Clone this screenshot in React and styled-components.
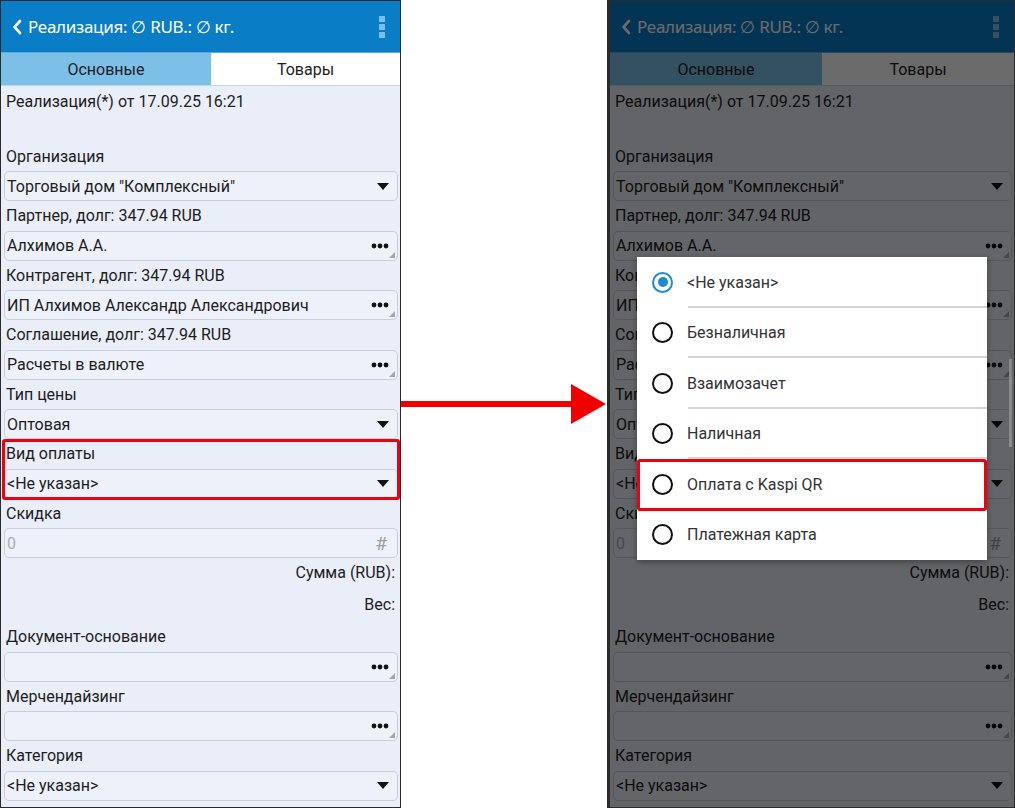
import React from 'react'
import styled, { createGlobalStyle } from 'styled-components'

const Global = createGlobalStyle`
  html, body { margin: 0; padding: 0; background: #ffffff; }
  body { font-family: Roboto, "Noto Sans", "Liberation Sans", sans-serif; }
  * { box-sizing: border-box; }
`

const Page = styled.div`
  display: flex;
  width: 1015px;
  height: 808px;
  background: #fff;
`

const Frame = styled.div`
  position: relative;
  width: ${p => p.w}px;
  height: 808px;
  border: 1.5px solid #2b2b2b;
  border-left-width: ${p => p.bl}px;
  background: #e9eef8;
  overflow: hidden;
  display: flex;
  flex-direction: column;
`

const Header = styled.div`
  height: 51px;
  flex: none;
  background: #0a7dc7;
  display: flex;
  align-items: center;
  padding: 0 15px 0 11px;
  color: #fff;
  font-family: "Noto Sans", Roboto, sans-serif;
  font-size: 17px;
  letter-spacing: -0.3px;
`

const Title = styled.div`
  flex: 1;
  display: flex;
  align-items: center;
  gap: 6px;
  white-space: nowrap;
`

const MenuDots = styled.div`
  display: flex;
  flex-direction: column;
  gap: 2px;
  & > span {
    width: 6px;
    height: 6px;
    background: #7fbde8;
  }
`

const Tabs = styled.div`
  height: 34px;
  flex: none;
  display: flex;
  border-top: 1px solid #5fa9d8;
  border-bottom: 1px solid #b9d6ee;
`

const Tab = styled.div`
  width: ${p => p.w}px;
  flex: ${p => (p.w ? 'none' : 1)};
  display: flex;
  align-items: center;
  justify-content: center;
  font-size: 16px;
  color: #1d1d1d;
  background: ${p => (p.active ? '#7cc0e8' : '#ffffff')};
`

const Body = styled.div`
  flex: 1;
  display: flex;
  flex-direction: column;
  padding: 0 1px 0 2px;
`

const DocTitle = styled.div`
  height: 55.5px;
  flex: none;
  padding: 6px 3px 0;
  font-size: 16px;
  color: #1d1d1d;
`

const Label = styled.div`
  height: ${p => p.h || 29.5}px;
  display: flex;
  align-items: center;
  justify-content: ${p => (p.right ? 'flex-end' : 'flex-start')};
  padding: 0 ${p => (p.right ? '4px' : '3px')};
  font-size: 16px;
  color: #1d1d1d;
  flex: none;
`

const Field = styled.div`
  position: relative;
  height: 30px;
  flex: none;
  margin: 0 1px;
  border: 1px solid #c9ced8;
  border-radius: 5px;
  background: #edf1f9;
  display: flex;
  align-items: center;
  padding: 0 8px 0 2px;
  font-size: 16px;
  color: ${p => (p.muted ? '#a9adb3' : '#1d1d1d')};
`

const Value = styled.span`
  flex: 1;
  white-space: nowrap;
`

const Corner = styled.span`
  position: absolute;
  right: 2px;
  bottom: 2px;
  width: 0;
  height: 0;
  border-left: 6px solid transparent;
  border-bottom: 6px solid #a3a7ad;
`

const Hash = styled.span`
  font-size: 19px;
  color: #9a9ea5;
  margin-right: 2px;
`

const Highlight = styled.div`
  position: relative;
  display: flex;
  flex-direction: column;
  &::after {
    content: '';
    position: absolute;
    left: -1px;
    right: -1px;
    top: 0px;
    bottom: -1px;
    border: 3px solid #ee0010;
    border-radius: 3px;
  }
`

const Shade = styled.div`
  position: absolute;
  inset: 0;
  background: rgba(0, 0, 0, 0.58);
`

const Scrollbar = styled.div`
  position: absolute;
  right: 2px;
  top: 358px;
  width: 3px;
  height: 88px;
  background: rgba(255, 255, 255, 0.25);
`

const Dialog = styled.div`
  position: absolute;
  left: 27px;
  top: 256px;
  width: 350px;
  background: #fff;
  box-shadow: 0 2px 6px rgba(0, 0, 0, 0.35);
  display: flex;
  flex-direction: column;
`

const Option = styled.div`
  position: relative;
  height: 50.5px;
  display: flex;
  align-items: center;
  gap: 14px;
  padding-left: 15px;
  font-size: 16px;
  color: #333;
  &::after {
    content: '';
    display: ${p => (p.last ? 'none' : 'block')};
    position: absolute;
    left: 51px;
    right: 0;
    bottom: 0;
    height: 2px;
    background: #d4d4d4;
  }
  ${p =>
    p.marked &&
    `
    &::before {
      content: '';
      position: absolute;
      inset: 0 0 -1px 0;
      border: 3px solid #ee0010;
      border-radius: 3px;
      z-index: 1;
    }
  `}
`

const Radio = styled.span`
  width: 21px;
  height: 21px;
  border-radius: 50%;
  border: 2.5px solid ${p => (p.on ? '#1c8bd6' : '#111')};
  display: flex;
  align-items: center;
  justify-content: center;
  & > span {
    width: 10px;
    height: 10px;
    border-radius: 50%;
    background: #1c8bd6;
    display: ${p => (p.on ? 'block' : 'none')};
  }
`

const ArrowZone = styled.div`
  flex: none;
  width: 206px;
  display: flex;
  align-items: center;
  padding-top: 1px;
`

const Chevron = () => (
  <svg width="10" height="16" viewBox="0 0 10 16">
    <path d="M8 2 L2.5 8 L8 14" fill="none" stroke="#fff" strokeWidth="2.6" strokeLinecap="round" strokeLinejoin="round" />
  </svg>
)

const Triangle = () => (
  <svg width="12" height="7" viewBox="0 0 12 7">
    <polygon points="0,0 12,0 6,7" fill="#111" />
  </svg>
)

const Dots = () => (
  <svg width="18" height="6" viewBox="0 0 18 6">
    <circle cx="3" cy="3" r="2.4" fill="#111" />
    <circle cx="9" cy="3" r="2.4" fill="#111" />
    <circle cx="15" cy="3" r="2.4" fill="#111" />
  </svg>
)

const Select = ({ value }) => (
  <Field>
    <Value>{value}</Value>
    <Triangle />
  </Field>
)

const Ref = ({ value }) => (
  <Field>
    <Value>{value}</Value>
    <Dots />
    <Corner />
  </Field>
)

const options = ['<Не указан>', 'Безналичная', 'Взаимозачет', 'Наличная', 'Оплата с Kaspi QR', 'Платежная карта']

const Phone = ({ w, bl, tabW, dimmed, mark }) => (
  <Frame w={w} bl={bl}>
    <Header>
      <Title>
        <Chevron />
        <span>Реализация: ∅ RUB.: ∅ кг.</span>
      </Title>
      <MenuDots>
        <span />
        <span />
        <span />
      </MenuDots>
    </Header>
    <Tabs>
      <Tab active w={tabW}>Основные</Tab>
      <Tab>Товары</Tab>
    </Tabs>
    <Body>
      <DocTitle>Реализация(*) от 17.09.25 16:21</DocTitle>
      <Label>Организация</Label>
      <Select value={'Торговый дом "Комплексный"'} />
      <Label>Партнер, долг: 347.94 RUB</Label>
      <Ref value="Алхимов А.А." />
      <Label>Контрагент, долг: 347.94 RUB</Label>
      <Ref value="ИП Алхимов Александр Александрович" />
      <Label>Соглашение, долг: 347.94 RUB</Label>
      <Ref value="Расчеты в валюте" />
      <Label>Тип цены</Label>
      <Select value="Оптовая" />
      {mark ? (
        <Highlight>
          <Label>Вид оплаты</Label>
          <Select value="<Не указан>" />
        </Highlight>
      ) : (
        <>
          <Label>Вид оплаты</Label>
          <Select value="<Не указан>" />
        </>
      )}
      <Label>Скидка</Label>
      <Field muted>
        <Value>0</Value>
        <Hash>#</Hash>
      </Field>
      <Label right h={29}>Сумма (RUB):</Label>
      <Label right h={35}>Вес:</Label>
      <Label>Документ-основание</Label>
      <Ref value="" />
      <Label>Мерчендайзинг</Label>
      <Ref value="" />
      <Label>Категория</Label>
      <Select value="<Не указан>" />
    </Body>
    {dimmed && (
      <>
        <Shade />
        <Scrollbar />
        <Dialog>
          {options.map((o, i) => (
            <Option key={o} last={i === options.length - 1} marked={i === 4}>
              <Radio on={i === 0}>
                <span />
              </Radio>
              {o}
            </Option>
          ))}
        </Dialog>
      </>
    )}
  </Frame>
)

export default function App() {
  return (
    <>
      <Global />
      <Page>
        <Phone w={401} bl={1.5} tabW={210} mark />
        <ArrowZone>
          <svg width="206" height="42" viewBox="0 0 206 42">
            <rect x="0" y="17" width="172" height="6" fill="#f20000" />
            <polygon points="170,0 205,20 170,40" fill="#f20000" />
          </svg>
        </ArrowZone>
        <Phone w={408} bl={3} tabW={212} dimmed />
      </Page>
    </>
  )
}
